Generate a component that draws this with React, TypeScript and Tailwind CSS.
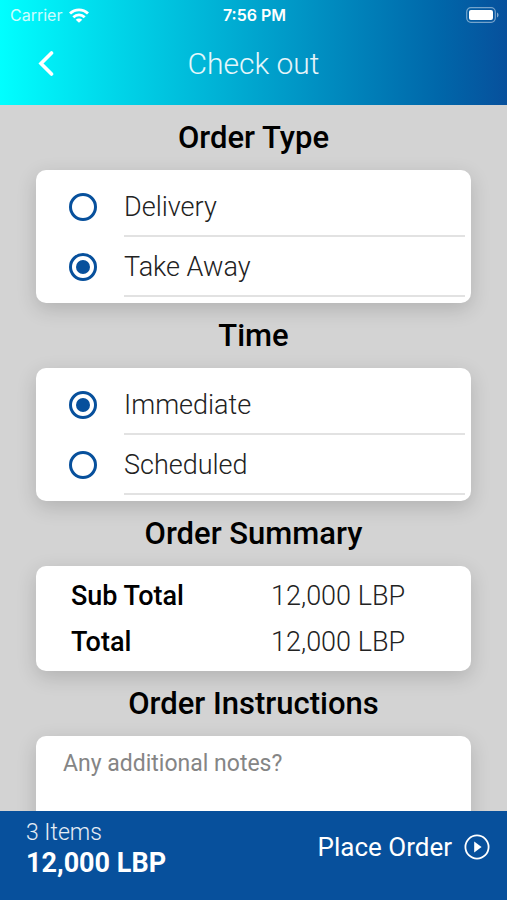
import React, { useState } from 'react';

interface RadioCardProps {
  name: string;
  options: string[];
  value: string;
  onChange: (value: string) => void;
}

const summary = [
  { label: 'Sub Total', amount: '12,000 LBP' },
  { label: 'Total', amount: '12,000 LBP' },
];

const cardClass = 'rounded-[10px] bg-white shadow-[0_6px_20px_rgba(0,0,0,0.16)]';

const SectionTitle: React.FC<{ id?: string; children: React.ReactNode }> = ({ id, children }) => (
  <h2 id={id} className="flex h-[65px] items-center justify-center text-[31px] leading-[36px] font-medium text-black">
    {children}
  </h2>
);

const RadioCard: React.FC<RadioCardProps> = ({ name, options, value, onChange }) => (
  <div role="radiogroup" aria-label={name} className={`${cardClass} pt-[7px] pr-[6px] pb-[6px] pl-[33px]`}>
    {options.map((option) => (
      <label key={option} className="flex h-[60px] cursor-pointer items-center gap-[27px]">
        <input
          type="radio"
          name={name}
          value={option}
          checked={value === option}
          onChange={() => onChange(option)}
          className="size-7 shrink-0 appearance-none rounded-full border-[3px] border-[#07509c] bg-white bg-clip-content p-1 checked:bg-[#07509c]"
        />
        <span className="flex h-full flex-1 items-center border-b-2 border-[#e2e2e2] pt-0.5 text-[27px] font-light text-[#222]">
          {option}
        </span>
      </label>
    ))}
  </div>
);

const WifiIcon = () => (
  <svg width="20" height="15" viewBox="0 0 20 15" fill="none" stroke="white" strokeWidth="2.8" aria-hidden="true">
    <path d="M1 5.6C6 .6 14 .6 19 5.6" />
    <path d="M4.3 9.2C7.6 6.1 12.4 6.1 15.7 9.2" />
    <path d="M10 14.8 6.7 11.7C8.6 10.1 11.4 10.1 13.3 11.7Z" fill="white" stroke="none" />
  </svg>
);

const BatteryIcon = () => (
  <svg width="33" height="16" viewBox="0 0 33 16" fill="none" aria-hidden="true">
    <rect x=".7" y=".7" width="28.6" height="14.6" rx="4.2" stroke="white" strokeOpacity=".45" strokeWidth="1.2" />
    <rect x="3" y="3" width="24" height="10" rx="2" fill="white" />
    <path d="M31 5.5C33 6.3 33 9.7 31 10.5Z" fill="white" fillOpacity=".5" />
  </svg>
);

const StatusBar = () => (
  <div className="grid h-[30px] grid-cols-3 items-center pr-[8px] pl-[10px] font-['Inter',sans-serif] text-[16px] text-white">
    <div className="flex items-center gap-[7px] text-white/80">
      <span>Carrier</span>
      <WifiIcon />
    </div>
    <span className="text-center font-semibold">7:56 PM</span>
    <div className="flex justify-end">
      <BatteryIcon />
    </div>
  </div>
);

export default function App() {
  const [orderType, setOrderType] = useState('Take Away');
  const [time, setTime] = useState('Immediate');
  const [notes, setNotes] = useState('');

  return (
    <div className="flex h-screen flex-col bg-[#d3d3d3] font-['Roboto',sans-serif]">
      <header className="h-[105px] shrink-0 bg-linear-to-r from-[#00ffff] to-[#07509c]">
        <StatusBar />
        <div className="grid h-[66px] grid-cols-[92px_1fr_92px] items-center">
          <button type="button" aria-label="Back" className="flex h-full items-center justify-center">
            <svg width="16" height="26" viewBox="0 0 16 26" fill="none" stroke="white" strokeWidth="3.6" aria-hidden="true">
              <path d="M13.5 3 3 13.5 13.5 24" strokeLinecap="round" />
            </svg>
          </button>
          <h1 className="text-center text-[30px] font-light text-white/90">Check out</h1>
        </div>
      </header>

      <main className="min-h-0 flex-1 overflow-y-auto px-9 [scrollbar-width:none]">
        <SectionTitle>Order Type</SectionTitle>
        <RadioCard name="Order Type" options={['Delivery', 'Take Away']} value={orderType} onChange={setOrderType} />

        <SectionTitle>Time</SectionTitle>
        <RadioCard name="Time" options={['Immediate', 'Scheduled']} value={time} onChange={setTime} />

        <SectionTitle>Order Summary</SectionTitle>
        <dl className={`${cardClass} pt-[7px] pr-4 pb-[6px] pl-[35px]`}>
          {summary.map((row) => (
            <div key={row.label} className="grid h-[46px] grid-cols-[200px_1fr] items-center text-[27px]">
              <dt className="font-medium text-black">{row.label}</dt>
              <dd className="font-light text-[#222]">{row.amount}</dd>
            </div>
          ))}
        </dl>

        <SectionTitle id="instructions">Order Instructions</SectionTitle>
        <textarea
          aria-labelledby="instructions"
          rows={5}
          value={notes}
          onChange={(e) => setNotes(e.target.value)}
          placeholder="Any additional notes?"
          className={`${cardClass} mb-6 block w-full resize-none px-[27px] py-[13px] text-[23px] leading-[30px] text-black outline-none placeholder:text-[#858585]`}
        />
      </main>

      <footer className="flex h-[89px] shrink-0 justify-between bg-[#07509c] pr-[17px] pl-[26px] text-white">
        <div className="pt-[7px]">
          <p className="text-[23px] leading-[30px] font-light text-white/90">3 Items</p>
          <p className="text-[27px] leading-[30px] font-bold">12,000 LBP</p>
        </div>
        <button type="button" className="flex h-[72px] cursor-pointer items-center gap-3 text-[26px]">
          Place Order
          <svg width="26" height="26" viewBox="0 0 26 26" fill="none" aria-hidden="true">
            <circle cx="13" cy="13" r="11.6" stroke="white" strokeWidth="1.8" />
            <path d="M10.2 7.4 17.6 13 10.2 18.6Z" fill="white" />
          </svg>
        </button>
      </footer>
    </div>
  );
}
